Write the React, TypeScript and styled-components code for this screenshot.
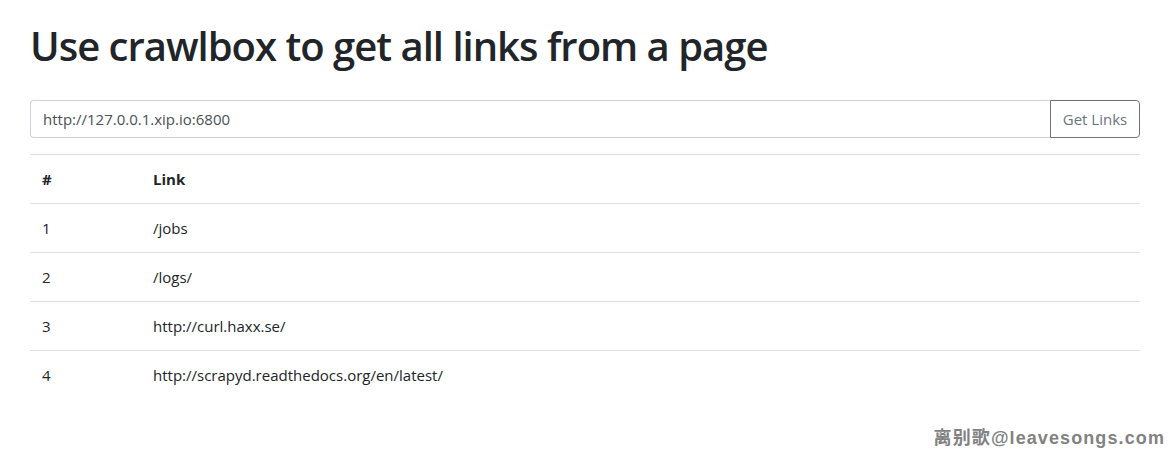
import React from "react";
import styled, { createGlobalStyle } from "styled-components";

const GlobalStyle = createGlobalStyle`
  html, body { margin: 0; padding: 0; background: #fff; }
  body {
    font-family: "Open Sans", "Noto Sans", sans-serif;
    font-size: 16px;
    line-height: 1.5;
    color: #212529;
  }
  * { box-sizing: border-box; }
`;

const Page = styled.div`
  position: relative;
  width: 1176px;
  height: 459px;
  padding: 0 36px 0 30px;
`;

const Title = styled.h1`
  margin: 0;
  padding-top: 22px;
  font-size: 40px;
  font-weight: 600;
  line-height: 48px;
  color: #212529;
  letter-spacing: -1px;
`;

const Form = styled.form`
  display: flex;
  margin-top: 30px;
  height: 38px;
`;

const Input = styled.input`
  flex: 1;
  height: 38px;
  padding: 6px 12px;
  font: inherit;
  font-size: 15px;
  color: #495057;
  border: 1px solid #ced4da;
  border-right: none;
  border-radius: 4px 0 0 4px;
  outline: none;
`;

const Button = styled.button`
  width: 90px;
  height: 38px;
  font: inherit;
  font-size: 15px;
  color: #6c757d;
  background: #fff;
  border: 1px solid #6c757d;
  border-radius: 0 4px 4px 0;
  padding: 0;
`;

const Table = styled.table`
  width: 100%;
  margin-top: 16px;
  border-collapse: collapse;
  font-size: 15px;
`;

const HeadCell = styled.th<{ $w?: number }>`
  text-align: left;
  font-weight: 700;
  padding: 12px 12px;
  border-top: 1px solid #dee2e6;
  border-bottom: 1px solid #dee2e6;
  height: 49px;
  width: ${(p) => (p.$w ? `${p.$w}px` : "auto")};
  vertical-align: middle;
`;

const Cell = styled.td`
  padding: 12px 12px;
  border-top: 1px solid #dee2e6;
  height: 49px;
  vertical-align: middle;
`;

const Watermark = styled.div`
  position: absolute;
  right: 11px;
  top: 425px;
  font-family: "Liberation Sans", "Noto Sans CJK SC", sans-serif;
  font-weight: 700;
  font-size: 18px;
  color: #828282;
  letter-spacing: 1.1px;
`;

const links = [
  "/jobs",
  "/logs/",
  "http://curl.haxx.se/",
  "http://scrapyd.readthedocs.org/en/latest/",
];

export default function App() {
  return (
    <>
      <GlobalStyle />
      <Page>
        <Title>Use crawlbox to get all links from a page</Title>
        <Form onSubmit={(e) => e.preventDefault()}>
          <Input defaultValue="http://127.0.0.1.xip.io:6800" />
          <Button type="submit">Get Links</Button>
        </Form>
        <Table>
          <thead>
            <tr>
              <HeadCell $w={111}>#</HeadCell>
              <HeadCell>Link</HeadCell>
            </tr>
          </thead>
          <tbody>
            {links.map((l, i) => (
              <tr key={l}>
                <Cell>{i + 1}</Cell>
                <Cell>{l}</Cell>
              </tr>
            ))}
          </tbody>
        </Table>
        <Watermark>离别歌@leavesongs.com</Watermark>
      </Page>
    </>
  );
}
